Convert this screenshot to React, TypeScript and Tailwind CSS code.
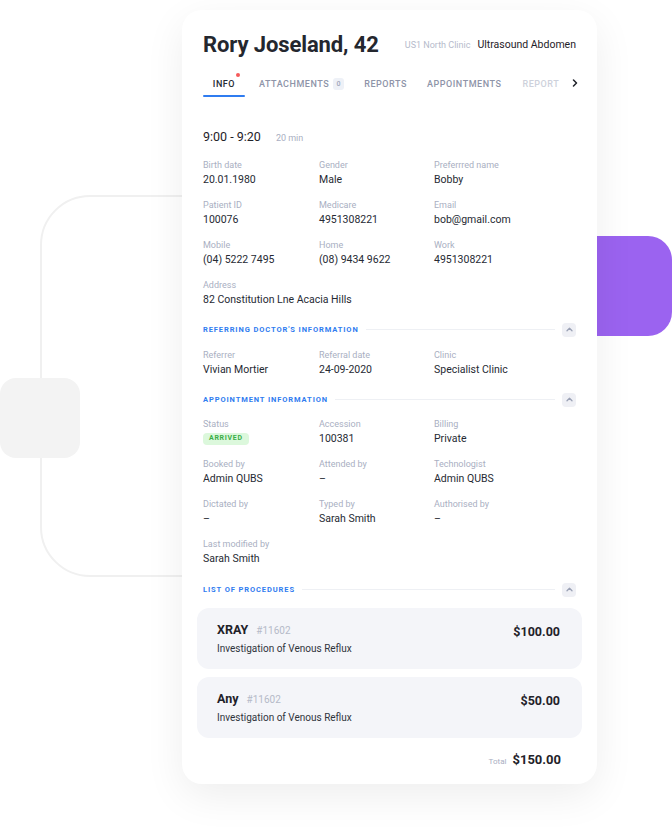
import React from "react";

const font = { fontFamily: "Roboto, 'Liberation Sans', sans-serif" };

function Field({ label, value, children, span }: { label: string; value?: string; children?: React.ReactNode; span?: boolean }) {
  return (
    <div className={span ? "flex flex-col col-span-3" : "flex flex-col"}>
      <div className="text-[9px] leading-[12px] text-[#a9afc2]">{label}</div>
      {children ? (
        <div className="mt-[2px] h-[14px] flex items-center">{children}</div>
      ) : (
        <div className="mt-[2px] text-[10.5px] leading-[14px] text-[#262a33] whitespace-nowrap">{value}</div>
      )}
    </div>
  );
}

function SectionHeader({ title }: { title: string }) {
  return (
    <div className="flex items-center h-[14px]">
      <div className="text-[7.5px] font-bold tracking-[0.12em] text-[#2f7cf0] uppercase whitespace-nowrap">{title}</div>
      <div className="flex-1 h-px bg-[#eef0f4] ml-[7px] mr-[7px]" />
      <div className="w-[14px] h-[14px] rounded-[4px] bg-[#eff0f5] flex items-center justify-center">
        <svg width="7" height="5" viewBox="0 0 7 5" fill="none">
          <path d="M1 3.8 L3.5 1.3 L6 3.8" stroke="#9aa1b5" strokeWidth="1.3" strokeLinecap="round" strokeLinejoin="round" />
        </svg>
      </div>
    </div>
  );
}

function Procedure({ name, price }: { name: string; price: string }) {
  return (
    <div className="rounded-[12px] bg-[#f4f5f9] h-[61px] pl-[20px] pr-[22px] pt-[14px] flex justify-between">
      <div>
        <div className="flex items-baseline gap-[8px]">
          <span className="text-[12.5px] font-bold text-[#1f2229] leading-[16px]">{name}</span>
          <span className="text-[10px] text-[#b5bac8]">#11602</span>
        </div>
        <div className="mt-[4px] text-[10px] leading-[13px] text-[#30343c]">Investigation of Venous Reflux</div>
      </div>
      <div className="text-[12.5px] font-bold text-[#1f2229] leading-[16px] pt-[2px]">{price}</div>
    </div>
  );
}

export default function App() {
  return (
    <div className="relative w-[672px] h-[835px] overflow-hidden bg-white" style={font}>
      {/* decorative background */}
      <div className="absolute left-[40px] top-[195px] w-[300px] h-[382px] rounded-[50px] border-2 border-[#f0f0f0]" />
      <div className="absolute left-0 top-[378px] w-[80px] h-[80px] rounded-[16px] bg-[#f3f3f3]" />
      <div className="absolute left-[540px] top-[236px] w-[132px] h-[100px] rounded-[24px] bg-[#9b63f0]" />

      {/* card */}
      <div className="relative ml-[182px] mt-[10px] w-[415px] h-[774px] rounded-[20px] bg-white shadow-[0_12px_40px_rgba(0,0,0,0.07)]">
        <div className="px-[21px] pt-[22px]">
          {/* header */}
          <div className="flex items-end justify-between h-[26px]">
            <div className="text-[22px] font-bold leading-[26px] text-[#24272e] tracking-[-0.005em]">Rory Joseland, 42</div>
            <div className="flex items-baseline gap-[7px] pb-[5px]">
              <span className="text-[9px] text-[#b6bbcb]">US1 North Clinic</span>
              <span className="text-[10.5px] text-[#1f2229]">Ultrasound Abdomen</span>
            </div>
          </div>

          {/* tabs */}
          <div className="mt-[18px] flex items-start h-[20px] relative text-[9px] font-medium tracking-[0.06em] uppercase whitespace-nowrap">
            <div className="relative shrink-0 w-[42px] h-[20px] flex justify-center pt-[2px] text-[#262a33]">
              INFO
              <span className="absolute top-[-3px] right-[5px] w-[4px] h-[4px] rounded-full bg-[#f55a5a]" />
              <span className="absolute bottom-[-1px] left-0 w-[42px] h-[2px] rounded bg-[#2f7cf0]" />
            </div>
            <div className="ml-[14px] shrink-0 pt-[2px] text-[#8e94a8] flex items-center">
              ATTACHMENTS
              <span className="ml-[4px] w-[11px] h-[12px] rounded-[3px] bg-[#eef1f7] text-[7px] text-[#a0a7ba] flex items-center justify-center -mt-[1px]">0</span>
            </div>
            <div className="ml-[20px] shrink-0 pt-[2px] text-[#8e94a8]">REPORTS</div>
            <div className="ml-[20px] shrink-0 pt-[2px] text-[#8e94a8]">APPOINTMENTS</div>
            <div className="ml-[21px] shrink-0 pt-[2px] text-[#cdd1db]">REPORT</div>
            <div className="ml-[13px] shrink-0 pt-[3px]">
              <svg width="6" height="8" viewBox="0 0 6 8" fill="none">
                <path d="M1.5 1 L4.5 4 L1.5 7" stroke="#1f2229" strokeWidth="1.5" strokeLinecap="round" strokeLinejoin="round" />
              </svg>
            </div>
          </div>

          {/* time */}
          <div className="mt-[33px] flex items-baseline">
            <span className="text-[12.5px] leading-[16px] text-[#1f2229]">9:00 - 9:20</span>
            <span className="ml-[15px] text-[9px] text-[#a9afc2]">20 min</span>
          </div>

          <div className="mt-[13px] grid grid-cols-[116px_115px_1fr] gap-y-[12px]">
            <Field label="Birth date" value="20.01.1980" />
            <Field label="Gender" value="Male" />
            <Field label="Preferrred name" value="Bobby" />
            <Field label="Patient ID" value="100076" />
            <Field label="Medicare" value="4951308221" />
            <Field label="Email" value="bob@gmail.com" />
            <Field label="Mobile" value="(04) 5222 7495" />
            <Field label="Home" value="(08) 9434 9622" />
            <Field label="Work" value="4951308221" />
            <Field label="Address" value="82 Constitution Lne Acacia Hills" span />
          </div>

          <div className="mt-[16px]">
            <SectionHeader title="Referring doctor's information" />
          </div>
          <div className="mt-[12px] grid grid-cols-[116px_115px_1fr] gap-y-[12px]">
            <Field label="Referrer" value="Vivian Mortier" />
            <Field label="Referral date" value="24-09-2020" />
            <Field label="Clinic" value="Specialist Clinic" />
          </div>

          <div className="mt-[16px]">
            <SectionHeader title="Appointment information" />
          </div>
          <div className="mt-[11px] grid grid-cols-[116px_115px_1fr] gap-y-[12px]">
            <Field label="Status">
              <span className="inline-flex items-center h-[12px] px-[6px] rounded-[4px] bg-[#dcf8dc] text-[7px] leading-none font-bold tracking-[0.1em] text-[#3aae48]">ARRIVED</span>
            </Field>
            <Field label="Accession" value="100381" />
            <Field label="Billing" value="Private" />
            <Field label="Booked by" value="Admin QUBS" />
            <Field label="Attended by" value="–" />
            <Field label="Technologist" value="Admin QUBS" />
            <Field label="Dictated by" value="–" />
            <Field label="Typed by" value="Sarah Smith" />
            <Field label="Authorised by" value="–" />
            <Field label="Last modified by" value="Sarah Smith" />
          </div>

          <div className="mt-[17px]">
            <SectionHeader title="List of procedures" />
          </div>
        </div>

        <div className="px-[15px] mt-[11px] flex flex-col gap-[8px]">
          <Procedure name="XRAY" price="$100.00" />
          <Procedure name="Any" price="$50.00" />
        </div>

        <div className="mt-[12px] pr-[36px] flex justify-end items-baseline gap-[6px]">
          <span className="text-[8px] text-[#a9afc2]">Total</span>
          <span className="text-[13px] font-bold text-[#1f2229]">$150.00</span>
        </div>
      </div>
    </div>
  );
}
